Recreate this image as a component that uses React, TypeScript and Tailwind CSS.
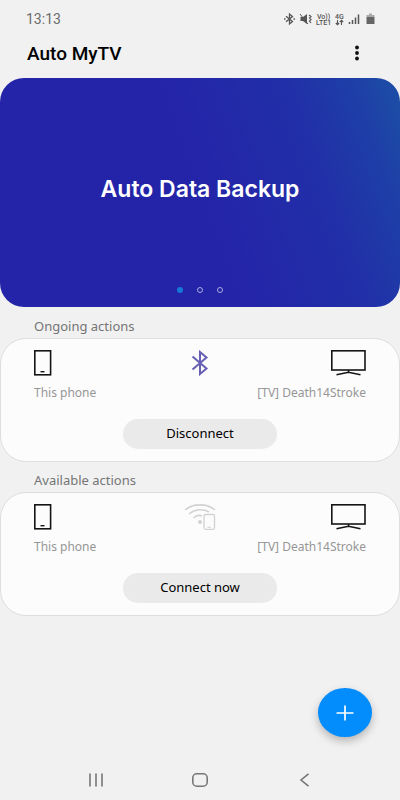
import { useState } from "react";
import type { ReactNode } from "react";

type Action = {
    title: string;
    button: string;
    icon: ReactNode;
};

const slides = ["Auto Data Backup", "Slide 2", "Slide 3"];

const actions: Action[] = [
    { title: "Ongoing actions", button: "Disconnect", icon: <BluetoothIcon /> },
    { title: "Available actions", button: "Connect now", icon: <WifiPhoneIcon /> },
];

function BluetoothIcon() {
    return (
        <svg width="18" height="26" viewBox="0 0 18 26" fill="none" stroke="#665fb3" strokeWidth="2">
            <path d="M1.5 6.5L15.5 18.5L9 24V2L15.5 7.5L1.5 19.5" />
        </svg>
    );
}

function WifiPhoneIcon() {
    return (
        <svg width="32" height="26" viewBox="0 0 32 26" fill="none" stroke="#d2d2d2" strokeWidth="1.6">
            <path d="M1 6C9 -0.8 23 -0.8 31 6" />
            <path d="M5 10C11 5 19 4.5 25 8" />
            <path d="M9.5 14C12 11.5 15.5 11 18 12" />
            <circle cx="16" cy="18" r="2" fill="#d2d2d2" stroke="none" />
            <rect x="20" y="10.5" width="10.5" height="14.8" rx="1.5" strokeWidth="1.3" />
            <path d="M23.5 23.3H27" strokeWidth="1" />
        </svg>
    );
}

function PhoneIcon() {
    return (
        <svg width="18" height="26" viewBox="0 0 18 26" fill="none" stroke="#151515">
            <rect x="0.8" y="0.8" width="15.8" height="24" strokeWidth="1.6" />
            <path d="M6.5 21.7H10.5" strokeWidth="1.4" />
        </svg>
    );
}

function TvIcon() {
    return (
        <svg width="35" height="26" viewBox="0 0 35 26" fill="none" stroke="#151515">
            <rect x="0.8" y="0.8" width="33.2" height="19.2" strokeWidth="1.6" />
            <path d="M17.5 20V22.3M5.5 24.8L17.5 22.3L29.5 24.8" strokeWidth="1.5" />
        </svg>
    );
}

function StatusIcons() {
    return (
        <svg width="94" height="14" viewBox="0 0 94 14" fill="none" stroke="#555" role="img" aria-label="Phone status">
            <path d="M3 4.2L9.5 9.6L6.5 12V2L9.5 4.4L3 9.8" strokeWidth="1.3" />
            <path d="M1 7H2.5M10.5 7H12" strokeWidth="1.3" />
            <path d="M17.5 5H20L24 2V12L20 9H17.5Z" fill="#555" stroke="none" />
            <path d="M17 2L25 12" strokeWidth="1" />
            <path d="M26 3L28 4.5L26.5 6L28 7.5L26.5 9L28 11" strokeWidth="1.2" />
            <g fill="#555" stroke="none" fontFamily="Roboto, sans-serif" fontWeight="500">
                <text x="34" y="6.5" fontSize="7">Vo))</text>
                <text x="33" y="13" fontSize="7">LTE1</text>
                <text x="52" y="6.5" fontSize="7">4G</text>
            </g>
            <path d="M54.5 8V12.5M52.8 11L54.5 12.7L56.2 11M58.5 13V8.5M56.8 10L58.5 8.3L60.2 10" strokeWidth="1.1" />
            <path d="M66.5 12V10M69.5 12V8M72.5 12V5.5M75.5 12V2.5" strokeWidth="1.5" />
            <path d="M86 1.5H89V3H91.5V5H83.5V3H86Z" fill="#aaa" stroke="none" />
            <path d="M83.5 5H91.5V12H83.5Z" fill="#666" stroke="none" />
        </svg>
    );
}

function ActionCard({ title, button, icon }: Action) {
    return (
        <section>
            <h2 className="flex h-[30px] items-center pt-2 pl-[34px] text-[13px] text-[#757575]">{title}</h2>
            <div className="flex h-[124px] flex-col rounded-[26px] border border-[#dedede] bg-[#fcfcfc] px-[33px] pt-[11px]">
                <div className="grid h-[26px] grid-cols-3">
                    <PhoneIcon />
                    <span className="flex justify-center">{icon}</span>
                    <span className="flex justify-end">
                        <TvIcon />
                    </span>
                </div>
                <div className="mt-[7px] flex justify-between text-[12px] leading-5 text-[#969696]">
                    <span>This phone</span>
                    <span>[TV] Death14Stroke</span>
                </div>
                <button className="mt-4 h-[30px] w-[154px] self-center rounded-full bg-[#eaeaea] text-[13px] text-black">
                    {button}
                </button>
            </div>
        </section>
    );
}

export default function App() {
    const [active, setActive] = useState(0);

    return (
        <div className="flex min-h-screen flex-col bg-[#f1f1f1] font-['Noto_Sans',sans-serif]">
            <div className="flex h-[38px] items-center justify-between pr-[23px] pl-[26px] font-['Roboto',sans-serif] text-[14px] text-[#6b6b6b]">
                <span>13:13</span>
                <StatusIcons />
            </div>

            <header className="flex h-10 items-start justify-between pr-[35px] pl-[27px]">
                <h1 className="font-['Roboto',sans-serif] text-[19px] leading-8 font-medium text-black">Auto MyTV</h1>
                <button aria-label="More options" className="flex h-[30px] w-4 items-center justify-center">
                    <svg width="4" height="16" viewBox="0 0 4 16" fill="#111">
                        <circle cx="2" cy="2.5" r="1.9" />
                        <circle cx="2" cy="8" r="1.9" />
                        <circle cx="2" cy="13.5" r="1.9" />
                    </svg>
                </button>
            </header>

            <main>
                <section className="mb-px flex h-[229px] flex-col items-center rounded-[24px] bg-[linear-gradient(70deg,#2424a8_50%,#212fa8_76%,#1e3fa7_90%,#1c50a6_100%)]">
                    <p className="flex h-[209px] items-center pt-[14px] font-['Inter',sans-serif] text-[23px] font-semibold text-white">
                        {slides[0]}
                    </p>
                    <div className="flex gap-[14px]">
                        {slides.map((slide, i) => (
                            <button
                                key={slide}
                                aria-label={`Go to slide ${i + 1}`}
                                onClick={() => setActive(i)}
                                className={
                                    active === i
                                        ? "size-[6px] rounded-full bg-[#1679d8]"
                                        : "size-[6px] rounded-full border border-[#a9a9df]"
                                }
                            />
                        ))}
                    </div>
                </section>

                {actions.map((action) => (
                    <ActionCard key={action.title} {...action} />
                ))}
            </main>

            <footer className="mt-auto flex flex-col">
                <button
                    aria-label="Add action"
                    className="mr-7 flex h-[49px] w-[54px] items-center justify-center self-end rounded-[50%] bg-[#038cfc] shadow-[0_4px_8px_rgba(0,0,0,0.25)]"
                >
                    <svg width="18" height="16" viewBox="0 0 18 16" stroke="#fff" strokeWidth="1.7">
                        <path d="M0.5 8H17.5M9 0.5V15.5" />
                    </svg>
                </button>
                <nav className="mt-[22px] grid h-[41px] grid-cols-[1fr_104px_1fr] items-center px-[88px] text-[#777]">
                    <button aria-label="Recent apps" className="justify-self-start">
                        <svg width="16" height="14" viewBox="0 0 16 14" stroke="currentColor" strokeWidth="1.6">
                            <path d="M2 0.5V13.5M8 0.5V13.5M14 0.5V13.5" />
                        </svg>
                    </button>
                    <button aria-label="Home" className="justify-self-center">
                        <svg width="16" height="14" viewBox="0 0 16 14" fill="none" stroke="currentColor" strokeWidth="1.6">
                            <rect x="0.8" y="0.8" width="14.4" height="12.4" rx="4" />
                        </svg>
                    </button>
                    <button aria-label="Back" className="justify-self-end">
                        <svg width="16" height="14" viewBox="0 0 16 14" fill="none" stroke="currentColor" strokeWidth="1.6">
                            <path d="M12.5 0.8L5 7L12.5 13.2" />
                        </svg>
                    </button>
                </nav>
            </footer>
        </div>
    );
}
